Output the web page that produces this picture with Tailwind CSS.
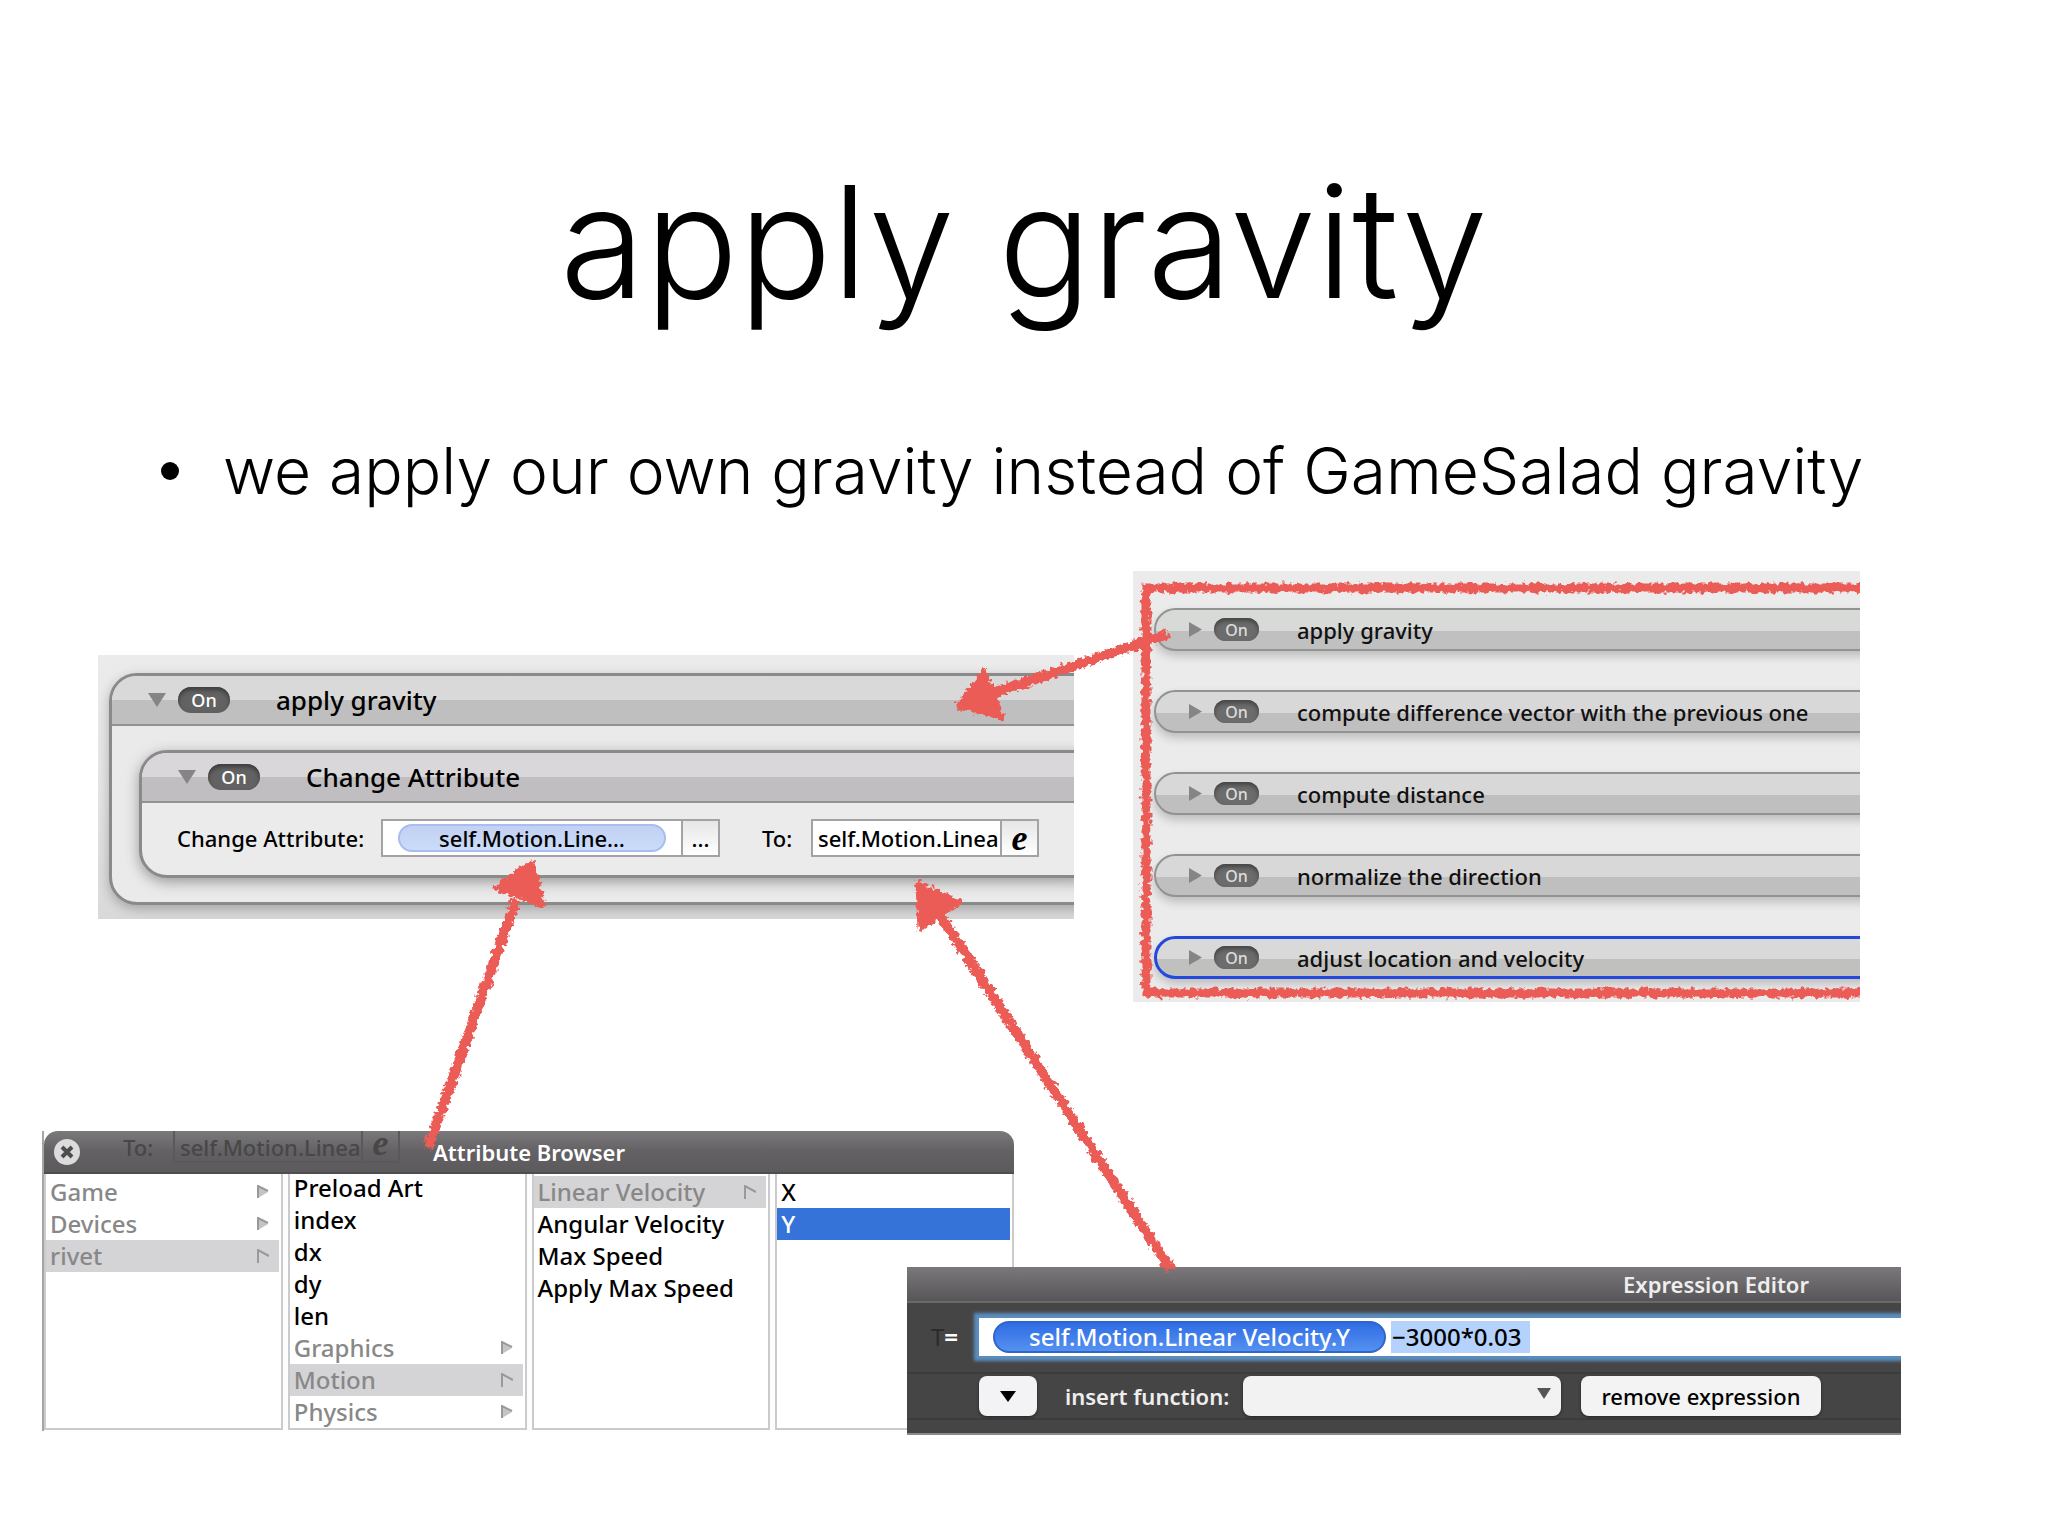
<!DOCTYPE html>
<html lang="en">
<head>
    <meta charset="UTF-8">
    <meta name="viewport" content="width=device-width, initial-scale=1.0">
    <title>apply gravity</title>
    <script src="https://cdn.jsdelivr.net/npm/@tailwindcss/browser@4"></script>
</head>
<body class="bg-white text-black font-medium font-['Noto_Sans',sans-serif]">
    <main class="relative min-h-screen overflow-hidden pt-[142px]">
        <h1 class="text-center text-[155px] leading-[200px] font-light font-['Inter',sans-serif]">apply gravity</h1>
        <ul class="mt-[89px] pl-[161px] font-light font-['Inter',sans-serif]">
            <li class="flex items-center text-[64px] leading-[80px] whitespace-nowrap">
                <span class="w-[18px] h-[18px] mr-11 rounded-full bg-black"></span>
                we apply our own gravity instead of GameSalad gravity
            </li>
        </ul>

        <div class="mt-[60px] pl-[98px] pr-[188px] flex items-start">
            <!-- Expanded rule -->
            <section class="flex-1 mt-[84px] mr-[59px] h-[264px] pt-[18px] pl-[11px] overflow-hidden bg-linear-to-b from-[#ebebeb] via-[#e6e6e6] to-[#d9d9d9]">
                <div class="-mr-8 h-[232px] border-3 border-[#8a8a8a] rounded-[28px] overflow-hidden bg-[#ebeaeb] shadow-[0_4px_12px_rgba(0,0,0,0.25)]">
                    <div class="h-[50px] flex items-center pl-9 border-b-2 border-[#929292] bg-linear-to-b from-[#d9d9d9] from-50% to-[#bfbfbf] to-50%">
                        <svg class="w-[18px] h-[14px]" viewBox="0 0 18 14"><path d="M0 0h18L9 14z" fill="#858585"></path></svg>
                        <button class="w-[52px] h-[26px] ml-3 rounded-full bg-[#626262] text-[18px] leading-[26px] text-white shadow-[inset_0_3px_4px_#3c3c3c]">On</button>
                        <h2 class="ml-[46px] text-[26px] leading-8">apply gravity</h2>
                    </div>
                    <div class="mt-6 ml-[27px] h-[128px] border-3 border-[#8a8a8a] rounded-[28px] overflow-hidden bg-[#ecebec] shadow-[0_4px_14px_rgba(0,0,0,0.35)]">
                        <div class="h-[50px] flex items-center pl-9 border-b-2 border-[#929292] bg-linear-to-b from-[#d9d7d9] from-50% to-[#c0bec0] to-50%">
                            <svg class="w-[18px] h-[14px]" viewBox="0 0 18 14"><path d="M0 0h18L9 14z" fill="#858585"></path></svg>
                            <button class="w-[52px] h-[26px] ml-3 rounded-full bg-[#626262] text-[18px] leading-[26px] text-white shadow-[inset_0_3px_4px_#3c3c3c]">On</button>
                            <h3 class="ml-[46px] text-[26px] leading-8">Change Attribute</h3>
                        </div>
                        <div class="flex items-center pt-4 pl-[35px] text-[22px] leading-8">
                            <label for="attr" class="w-[204px]">Change Attribute:</label>
                            <div class="w-[302px] h-[38px] flex items-center justify-center border-2 border-[#a3a3a3] bg-white">
                                <input id="attr" readonly value="self.Motion.Line…" class="w-[268px] h-7 rounded-full border-2 border-[#a9bdf0] bg-linear-to-b from-[#c3d0f2] to-[#c9dcf8] text-center">
                            </div>
                            <button class="w-[37px] h-[38px] border-2 border-l-0 border-[#a3a3a3] bg-linear-to-b from-[#e6e6e6] to-white">...</button>
                            <label for="to" class="ml-[42px] w-[49px]">To:</label>
                            <input id="to" value="self.Motion.Linea" class="w-[191px] h-[38px] pl-[5px] border-2 border-[#a3a3a3] bg-white">
                            <button class="w-[37px] h-[38px] border-2 border-l-0 border-[#a3a3a3] bg-linear-to-b from-[#e6e6e6] to-white font-['Liberation_Serif',serif] text-[36px] leading-6 font-bold italic">e</button>
                        </div>
                    </div>
                </div>
            </section>

            <!-- Rule list -->
            <section class="w-[727px] h-[431px] pt-[37px] pl-[21px] overflow-hidden bg-[#ebebec]">
                <ul class="flex flex-col gap-[39px] -mr-8 text-[22px] leading-8 text-[#111]">
                    <li class="h-[43px] flex items-center pl-[33px] rounded-l-full border-2 border-[#929492] bg-linear-to-b from-[#d8dad7] from-54% to-[#bfc0bf] to-54% shadow-[0_5px_10px_rgba(0,0,0,0.2)]">
                        <svg class="w-[13px] h-[15px]" viewBox="0 0 13 15"><path d="M0 0v15l13-7.500z" fill="#858585"></path></svg>
                        <button class="w-[45px] h-[23px] ml-3 rounded-full bg-[#6c6c6c] text-[16px] leading-[22px] text-[#ddd] shadow-[inset_0_3px_4px_#444]">On</button>
                        <span class="ml-[38px]">apply gravity</span>
                    </li>
                    <li class="h-[43px] flex items-center pl-[33px] rounded-l-full border-2 border-[#929292] bg-linear-to-b from-[#d9d8d9] from-54% to-[#c0bfc0] to-54% shadow-[0_5px_10px_rgba(0,0,0,0.2)]">
                        <svg class="w-[13px] h-[15px]" viewBox="0 0 13 15"><path d="M0 0v15l13-7.500z" fill="#858585"></path></svg>
                        <button class="w-[45px] h-[23px] ml-3 rounded-full bg-[#6c6c6c] text-[16px] leading-[22px] text-[#ddd] shadow-[inset_0_3px_4px_#444]">On</button>
                        <span class="ml-[38px] whitespace-nowrap">compute difference vector with the previous one</span>
                    </li>
                    <li class="h-[43px] flex items-center pl-[33px] rounded-l-full border-2 border-[#929292] bg-linear-to-b from-[#d9d8d9] from-54% to-[#c0bfc0] to-54% shadow-[0_5px_10px_rgba(0,0,0,0.2)]">
                        <svg class="w-[13px] h-[15px]" viewBox="0 0 13 15"><path d="M0 0v15l13-7.500z" fill="#858585"></path></svg>
                        <button class="w-[45px] h-[23px] ml-3 rounded-full bg-[#6c6c6c] text-[16px] leading-[22px] text-[#ddd] shadow-[inset_0_3px_4px_#444]">On</button>
                        <span class="ml-[38px]">compute distance</span>
                    </li>
                    <li class="h-[43px] flex items-center pl-[33px] rounded-l-full border-2 border-[#929292] bg-linear-to-b from-[#d9d8d9] from-54% to-[#c0bfc0] to-54% shadow-[0_5px_10px_rgba(0,0,0,0.2)]">
                        <svg class="w-[13px] h-[15px]" viewBox="0 0 13 15"><path d="M0 0v15l13-7.500z" fill="#858585"></path></svg>
                        <button class="w-[45px] h-[23px] ml-3 rounded-full bg-[#6c6c6c] text-[16px] leading-[22px] text-[#ddd] shadow-[inset_0_3px_4px_#444]">On</button>
                        <span class="ml-[38px]">normalize the direction</span>
                    </li>
                    <li class="h-[43px] flex items-center pl-8 rounded-l-full border-3 border-[#2447dc] bg-linear-to-b from-[#d9d9d9] from-54% to-[#c0c0be] to-54% shadow-[0_5px_10px_rgba(0,0,0,0.2)]">
                        <svg class="w-[13px] h-[15px]" viewBox="0 0 13 15"><path d="M0 0v15l13-7.500z" fill="#858585"></path></svg>
                        <button class="w-[45px] h-[23px] ml-3 rounded-full bg-[#6c6c6c] text-[16px] leading-[22px] text-[#ddd] shadow-[inset_0_3px_4px_#444]">On</button>
                        <span class="ml-[38px]">adjust location and velocity</span>
                    </li>
                </ul>
            </section>
        </div>

        <div class="mt-[129px] pl-[42px] pr-[147px] flex items-start">
            <!-- Attribute browser -->
            <section class="w-[972px] h-[300px] shrink-0 border-l-2 border-[#a5a5a8] bg-[#fdfdfd]">
                <header class="relative h-[43px] flex items-center justify-center rounded-t-[14px] overflow-hidden border-b-2 border-[#4f4d4f] bg-linear-to-b from-[#7b797b] via-[#636163] to-[#5c5a5c]">
                    <div class="absolute left-[79px] top-0 flex text-[22px] leading-8 text-[#474747]">
                        <span class="w-[50px]">To:</span>
                        <span class="w-[190px] h-8 pl-[5px] border-2 border-t-0 border-[#595959]">self.Motion.Linea</span>
                        <span class="w-[37px] h-8 border-2 border-t-0 border-l-0 border-[#595959] text-center font-['Liberation_Serif',serif] text-[36px] leading-6 font-bold italic">e</span>
                    </div>
                    <button class="absolute left-[10px] top-2 w-[26px] h-[26px]" aria-label="Close">
                        <svg viewBox="0 0 26 26"><circle cx="13" cy="13" r="13" fill="#dcdcdc"></circle><path d="M8 8l10 10M18 8L8 18" stroke="#4d4d4d" stroke-width="4"></path></svg>
                    </button>
                    <h2 class="relative text-[22px] leading-8 font-semibold text-white">Attribute Browser</h2>
                </header>
                <div class="grid grid-cols-4 gap-[5px] h-[256px] text-[24px] leading-8">
                    <ul class="border-2 border-t-0 border-[#cbcacd] bg-white pt-[2px] text-[#888]">
                        <li class="flex items-center justify-between mr-[2px] pl-1 pr-[10px]">Game <svg class="w-[12px] h-[14px]" viewBox="0 0 12 14"><path d="M1 1v12l10-6z" fill="#c4c4c4"></path><path d="M1 13V1l10 5" fill="none" stroke="#999" stroke-width="2"></path></svg></li>
                        <li class="flex items-center justify-between mr-[2px] pl-1 pr-[10px]">Devices <svg class="w-[12px] h-[14px]" viewBox="0 0 12 14"><path d="M1 1v12l10-6z" fill="#c4c4c4"></path><path d="M1 13V1l10 5" fill="none" stroke="#999" stroke-width="2"></path></svg></li>
                        <li class="flex items-center justify-between mr-[2px] pl-1 pr-[10px] bg-[#d4d3d5]">rivet <svg class="w-[12px] h-[14px]" viewBox="0 0 12 14"><path d="M1 14V1l11 6" fill="none" stroke="#999" stroke-width="2"></path></svg></li>
                    </ul>
                    <ul class="border-2 border-t-0 border-[#cbcacd] bg-white overflow-hidden">
                        <li class="-mt-[2px] pl-1">Preload Art</li>
                        <li class="pl-1">index</li>
                        <li class="pl-1">dx</li>
                        <li class="pl-1">dy</li>
                        <li class="pl-1">len</li>
                        <li class="flex items-center justify-between mr-[2px] pl-1 pr-[10px] text-[#888]">Graphics <svg class="w-[12px] h-[14px]" viewBox="0 0 12 14"><path d="M1 1v12l10-6z" fill="#c4c4c4"></path><path d="M1 13V1l10 5" fill="none" stroke="#999" stroke-width="2"></path></svg></li>
                        <li class="flex items-center justify-between mr-[2px] pl-1 pr-[10px] text-[#888] bg-[#d4d3d5]">Motion <svg class="w-[12px] h-[14px]" viewBox="0 0 12 14"><path d="M1 14V1l11 6" fill="none" stroke="#999" stroke-width="2"></path></svg></li>
                        <li class="flex items-center justify-between mr-[2px] pl-1 pr-[10px] text-[#888]">Physics <svg class="w-[12px] h-[14px]" viewBox="0 0 12 14"><path d="M1 1v12l10-6z" fill="#c4c4c4"></path><path d="M1 13V1l10 5" fill="none" stroke="#999" stroke-width="2"></path></svg></li>
                    </ul>
                    <ul class="border-2 border-t-0 border-[#cbcacd] bg-white pt-[2px]">
                        <li class="flex items-center justify-between mr-[2px] pl-1 pr-[10px] text-[#888] bg-[#d4d3d5]">Linear Velocity <svg class="w-[12px] h-[14px]" viewBox="0 0 12 14"><path d="M1 14V1l11 6" fill="none" stroke="#999" stroke-width="2"></path></svg></li>
                        <li class="pl-1">Angular Velocity</li>
                        <li class="pl-1">Max Speed</li>
                        <li class="pl-1">Apply Max Speed</li>
                    </ul>
                    <ul class="border-2 border-t-0 border-[#cbcacd] bg-white pt-[2px]">
                        <li class="pl-1">X</li>
                        <li class="mr-[2px] pl-1 text-white bg-[#3573d8]">Y</li>
                    </ul>
                </div>
            </section>

            <!-- Expression editor -->
            <section class="relative flex-1 -ml-[107px] mt-[136px] h-[168px] overflow-hidden border-b-2 border-[#8c8b8c] bg-[#464546]">
                <header class="h-9 flex items-center justify-end pr-[92px] border-b-2 border-[#6a696a] bg-linear-to-b from-[#7a787a] to-[#585658]">
                    <h2 class="text-[22px] leading-8 font-semibold text-[#eee]">Expression Editor</h2>
                </header>
                <div class="flex items-center mt-[15px] pl-6 text-[24px] leading-8">
                    <label for="expr" class="w-12 flex font-bold text-white"><span class="font-normal text-[#2b2b2b]">T</span>=</label>
                    <div class="flex-1 -mr-4 h-[38px] flex items-center pl-[14px] bg-white shadow-[0_0_3px_5px_#5a8dbd]">
                        <input readonly aria-label="Attribute" value="self.Motion.Linear Velocity.Y" class="w-[393px] h-8 rounded-full border-2 border-[#2f66c9] bg-linear-to-b from-[#2f6ce4] to-[#5591f0] text-center text-white">
                        <input id="expr" value="−3000*0.03" class="w-[139px] h-8 ml-[5px] pl-px bg-[#b4d2fb]">
                    </div>
                </div>
                <div class="flex items-center h-[48px] mt-4 pl-[72px] border-y-2 border-[#3c3b3c] text-[22px] leading-8">
                    <button class="w-[58px] h-10 flex items-center justify-center rounded-lg bg-[#f3f3f5] shadow-[0_1px_3px_#222]" aria-label="Insert attribute">
                        <svg class="w-4 h-[11px]" viewBox="0 0 16 11"><path d="M0 0h16L8 11z"></path></svg>
                    </button>
                    <label for="fn" class="w-[178px] ml-7 font-semibold text-[#eee]">insert function:</label>
                    <div class="relative w-[318px]">
                        <select id="fn" class="block w-full h-10 appearance-none rounded-lg bg-[#f2f2f2] shadow-[0_1px_3px_#222]"><option></option></select>
                        <svg class="absolute right-[10px] top-3 w-[14px] h-[11px]" viewBox="0 0 14 11"><path d="M0 0h14L7 11z" fill="#555"></path></svg>
                    </div>
                    <button class="w-[240px] h-10 ml-5 rounded-lg bg-[#f3f3f3] shadow-[0_1px_3px_#222]">remove expression</button>
                </div>
            </section>
        </div>

        <!-- Chalk annotations -->
        <svg class="absolute inset-0 w-full pointer-events-none" viewBox="0 0 2048 1536" fill="#ec5b56" stroke="#ec5b56">
            <defs>
                <filter id="chalk" filterUnits="userSpaceOnUse" x="0" y="0" width="2048" height="1536">
                    <feTurbulence type="fractalNoise" baseFrequency="0.22" numOctaves="2" seed="4"></feTurbulence>
                    <feDisplacementMap in="SourceGraphic" scale="9" xChannelSelector="R" yChannelSelector="G"></feDisplacementMap>
                </filter>
                <clipPath id="edge"><path d="M0 0H1860V1536H0z"></path></clipPath>
            </defs>
            <g clip-path="url(#edge)">
                <path filter="url(#chalk)" d="M1880 588H1146V993H1880" fill="none" stroke-width="9"></path>
            </g>
            <g filter="url(#chalk)" stroke-width="10">
                <path d="M1168 634L990 694"></path>
                <path d="M428 1148L516 900"></path>
                <path d="M1171 1270L938 912"></path>
                <g stroke-width="5" stroke-linejoin="round">
                    <path d="M958 706L984 671L1002 717z"></path>
                    <path d="M532 862L496 888L543 905z"></path>
                    <path d="M918 884L960 902L920 929z"></path>
                </g>
            </g>
        </svg>
    </main>
</body>
</html>
